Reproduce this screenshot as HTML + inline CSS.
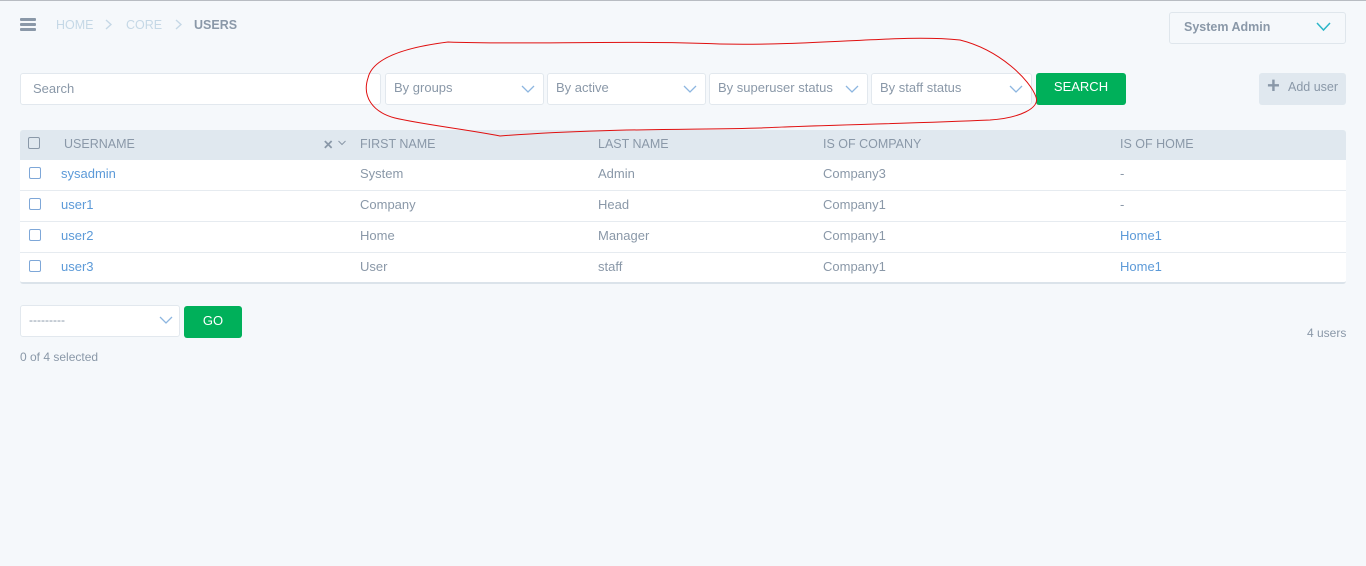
<!DOCTYPE html>
<html><head><style>
*{box-sizing:border-box;margin:0;padding:0}
body{width:1366px;height:566px;background:#f5f8fb;font-family:"Liberation Sans",sans-serif;font-size:13px;color:#8a98a8;position:relative;overflow:hidden}
.a{position:absolute}
.box{background:#fff;border:1px solid #e2e8ee;border-radius:3px}
.sel{position:absolute;top:73px;height:32px;background:#fff;border:1px solid #e2e8ee;border-radius:3px;padding:0 8px;line-height:28px;color:#8a98a8}
.chev{position:absolute;right:8px;top:10px;width:14px;height:10px}
.btn{position:absolute;background:#00b05a;color:#fff;border-radius:3px;text-align:center;font-size:13px}
.th{position:absolute;top:137px;color:#8a98a8;font-size:12.5px}
.row{position:absolute;left:20px;width:1326px;height:31px;background:#fff;border-bottom:1px solid #e6ebf0}
.cell{position:absolute;top:6px;font-size:13px;color:#8a98a8}
.cb{position:absolute;left:9px;top:7px;width:12px;height:12px;border:1.5px solid #7ea7d8;border-radius:2px}
.lnk{color:#5c9ad8}
</style></head><body>
<div class="a" style="left:0;top:0;width:1366px;height:1px;background:#b8bcc2"></div>
<div class="a" style="left:20px;top:18px;width:16px;height:3px;background:#8a98a8;box-shadow:0 5px 0 #8a98a8,0 10px 0 #8a98a8;border-radius:1px"></div>
<div class="a" style="left:56px;top:18px;font-size:12.5px;color:#c5d8e6">HOME</div>
<svg class="a" style="left:105px;top:19px" width="7" height="11"><path d="M1 1L6 5.5L1 10" stroke="#c5d8e6" stroke-width="1.4" fill="none"/></svg>
<div class="a" style="left:126px;top:18px;font-size:12.5px;color:#c5d8e6">CORE</div>
<svg class="a" style="left:175px;top:19px" width="7" height="11"><path d="M1 1L6 5.5L1 10" stroke="#c5d8e6" stroke-width="1.4" fill="none"/></svg>
<div class="a" style="left:194px;top:18px;font-size:12.5px;color:#8a98a8;font-weight:bold">USERS</div>

<div class="a box" style="left:1169px;top:12px;width:177px;height:32px;background:#f5f8fb;border-color:#dfe6ec"></div>
<div class="a" style="left:1184px;top:20px;font-weight:bold;color:#8a98a8;font-size:12.5px">System Admin</div>
<svg class="a" style="left:1316px;top:22px" width="15" height="10"><path d="M1 1L7.5 8L14 1" stroke="#2bb6c8" stroke-width="1.5" fill="none"/></svg>

<div class="a box" style="left:20px;top:73px;width:361px;height:32px"></div>
<div class="a" style="left:33px;top:81px">Search</div>
<div class="sel" style="left:385px;width:159px">By groups<svg class="chev"><path d="M1 2L7 8L13 2" stroke="#8db6e0" stroke-width="1.3" fill="none"/></svg></div>
<div class="sel" style="left:547px;width:159px">By active<svg class="chev"><path d="M1 2L7 8L13 2" stroke="#8db6e0" stroke-width="1.3" fill="none"/></svg></div>
<div class="sel" style="left:709px;width:159px">By superuser status<svg class="chev"><path d="M1 2L7 8L13 2" stroke="#8db6e0" stroke-width="1.3" fill="none"/></svg></div>
<div class="sel" style="left:871px;width:161px">By staff status<svg class="chev"><path d="M1 2L7 8L13 2" stroke="#8db6e0" stroke-width="1.3" fill="none"/></svg></div>
<div class="btn" style="left:1036px;top:73px;width:90px;height:32px;line-height:28px">SEARCH</div>
<div class="a" style="left:1259px;top:73px;width:87px;height:32px;background:#e0e8ef;border-radius:3px"></div>
<div class="a" style="left:1267px;top:73px;font-size:22px;font-weight:bold;color:#8a98a8">+</div>
<div class="a" style="left:1288px;top:80px;font-size:12.5px">Add user</div>

<div class="a" style="left:20px;top:130px;width:1326px;height:30px;background:#e0e8ef;border-radius:3px 3px 0 0"></div>
<div class="a" style="left:28px;top:137px;width:12px;height:12px;border:1.5px solid #8a98a8;border-radius:2px"></div>
<div class="th" style="left:64px">USERNAME</div>
<div class="th" style="left:323px;font-weight:bold">&#x2715;</div>
<svg class="a" style="left:338px;top:140px" width="8" height="6"><path d="M0.5 1L4 4.5L7.5 1" stroke="#8a98a8" fill="none"/></svg>
<div class="th" style="left:360px">FIRST NAME</div>
<div class="th" style="left:598px">LAST NAME</div>
<div class="th" style="left:823px">IS OF COMPANY</div>
<div class="th" style="left:1120px">IS OF HOME</div>

<div class="row" style="top:160px"><div class="cb"></div><div class="cell lnk" style="left:41px">sysadmin</div><div class="cell" style="left:340px">System</div><div class="cell" style="left:578px">Admin</div><div class="cell" style="left:803px">Company3</div><div class="cell" style="left:1100px">-</div></div>
<div class="row" style="top:191px"><div class="cb"></div><div class="cell lnk" style="left:41px">user1</div><div class="cell" style="left:340px">Company</div><div class="cell" style="left:578px">Head</div><div class="cell" style="left:803px">Company1</div><div class="cell" style="left:1100px">-</div></div>
<div class="row" style="top:222px"><div class="cb"></div><div class="cell lnk" style="left:41px">user2</div><div class="cell" style="left:340px">Home</div><div class="cell" style="left:578px">Manager</div><div class="cell" style="left:803px">Company1</div><div class="cell lnk" style="left:1100px">Home1</div></div>
<div class="row" style="top:253px;height:31px;border-bottom:2px solid #dbe3ea;border-radius:0 0 3px 3px"><div class="cb"></div><div class="cell lnk" style="left:41px">user3</div><div class="cell" style="left:340px">User</div><div class="cell" style="left:578px">staff</div><div class="cell" style="left:803px">Company1</div><div class="cell lnk" style="left:1100px">Home1</div></div>

<div class="a box" style="left:20px;top:305px;width:160px;height:32px"></div>
<div class="a" style="left:29px;top:313px;font-size:12px">---------</div>
<svg class="a" style="left:159px;top:316px" width="15" height="10"><path d="M1 1L7 7L13 1" stroke="#8db6e0" stroke-width="1.3" fill="none"/></svg>
<div class="btn" style="left:184px;top:306px;width:58px;height:32px;line-height:30px">GO</div>
<div class="a" style="left:20px;top:350px;font-size:12px">0 of 4 selected</div>
<div class="a" style="left:1307px;top:326px;font-size:12px">4 users</div>

<svg class="a" style="left:0;top:0;z-index:5" width="1366" height="566"><path d="M448 42 C520 45 620 40 720 44 C820 46 900 34 960 40 C1000 50 1030 80 1036 97 C1040 108 1020 118 990 120 C900 124 820 125 760 128 C700 130 600 128 500 136 C470 130 420 124 395 118 C372 112 362 96 368 78 C372 60 400 48 448 42 Z" stroke="#e01010" stroke-width="1" fill="none"/></svg>
</body></html>
